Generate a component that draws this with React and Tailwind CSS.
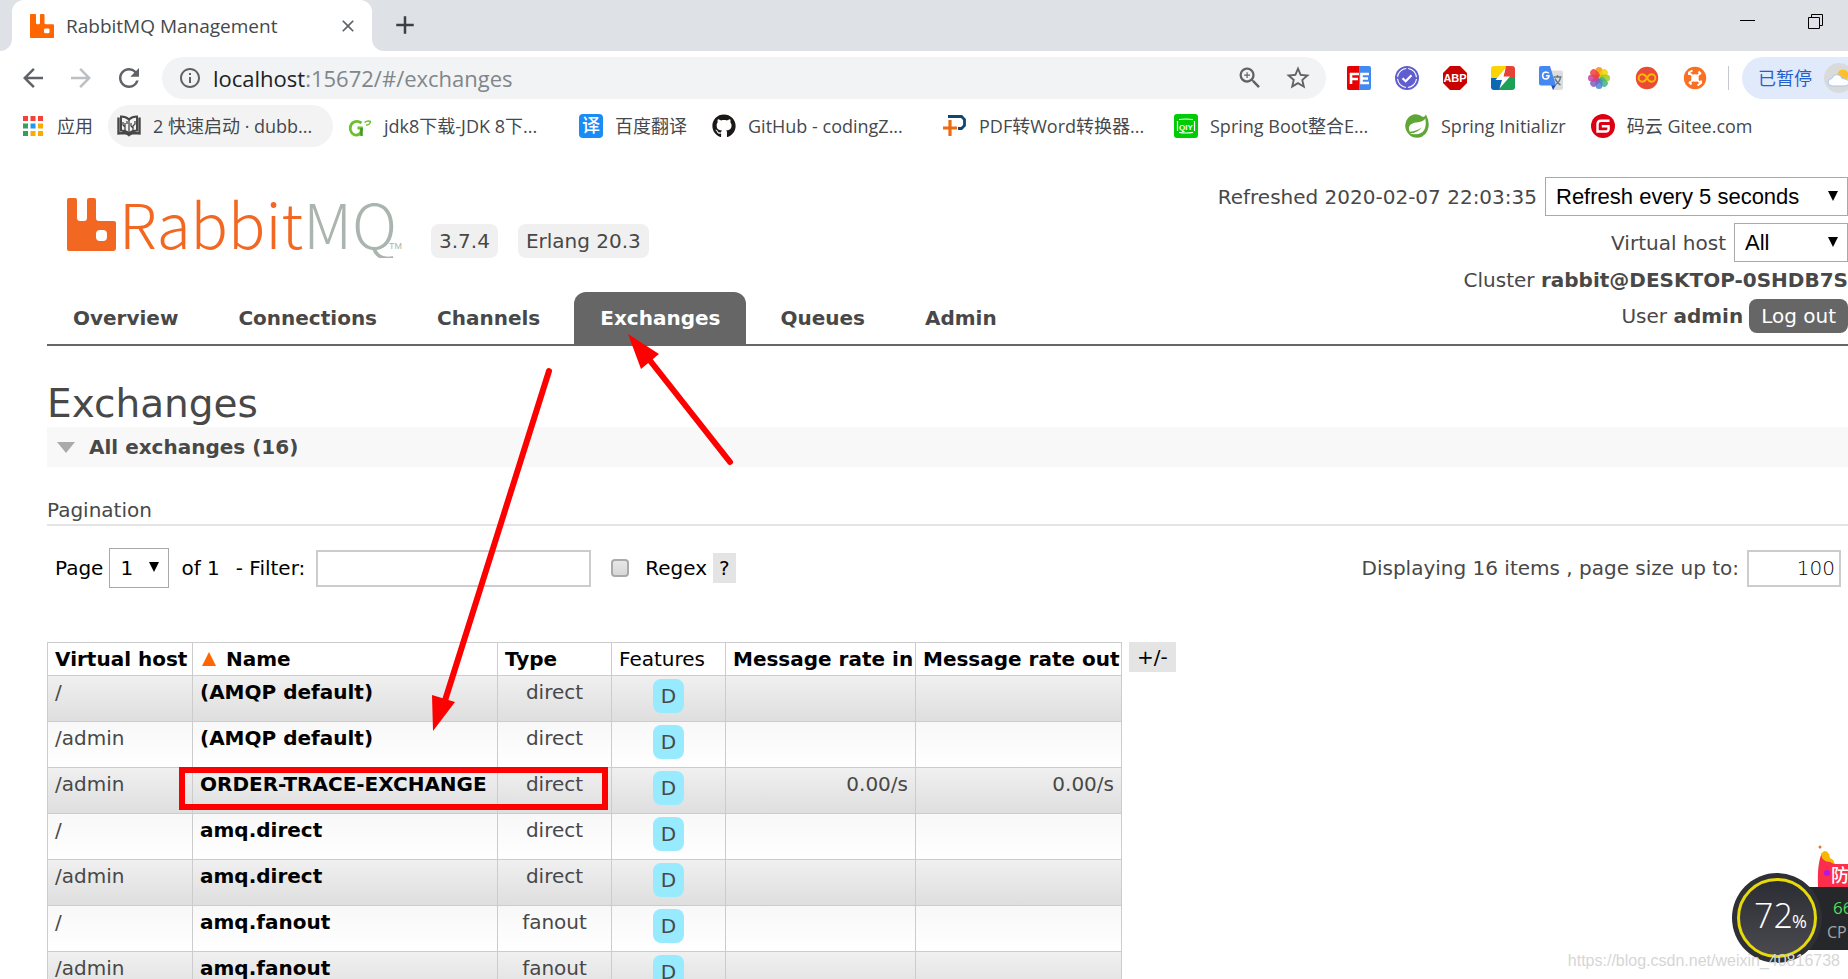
import React, { useState } from 'react';
import {
  MdAdd,
  MdArrowBack,
  MdArrowForward,
  MdClose,
  MdInfoOutline,
  MdRefresh,
  MdStarBorder,
  MdZoomIn,
} from 'react-icons/md';
import { FaGithub } from 'react-icons/fa';

const exchanges = [
  { vhost: '/', name: '(AMQP default)', type: 'direct' },
  { vhost: '/admin', name: '(AMQP default)', type: 'direct' },
  { vhost: '/admin', name: 'ORDER-TRACE-EXCHANGE', type: 'direct', rateIn: '0.00/s', rateOut: '0.00/s' },
  { vhost: '/', name: 'amq.direct', type: 'direct' },
  { vhost: '/admin', name: 'amq.direct', type: 'direct' },
  { vhost: '/', name: 'amq.fanout', type: 'fanout' },
  { vhost: '/admin', name: 'amq.fanout', type: 'fanout' },
];

const tabs = ['Overview', 'Connections', 'Channels', 'Exchanges', 'Queues', 'Admin'];

/* ---------- Icons ---------- */

const RabbitIcon = ({ className, color }) => (
  <svg viewBox="0 0 48 56" preserveAspectRatio="none" className={className} aria-hidden="true">
    <path
      fill={color}
      fillRule="evenodd"
      d="M2 0h8q2 0 2 2v19q0 3 3 3h2q3 0 3-3V2q0-2 2-2h5q2 0 2 2v19q0 3 3 3h14q2 0 2 2v28q0 2-2 2H2q-2 0-2-2V2q0-2 2-2zM31 34q-3 0-3 3v5q0 3 3 3h5q3 0 3-3v-5q0-3-3-3z"
    />
  </svg>
);

const AppsIcon = () => {
  const colors = ['#f44336', '#f44336', '#f44336', '#34a05a', '#2196f3', '#fbaa00', '#34a05a', '#fbaa00', '#fbaa00'];
  return (
    <svg viewBox="0 0 20 20" className="size-5" aria-hidden="true">
      {colors.map((c, i) => (
        <rect key={i} x={(i % 3) * 7.5} y={Math.floor(i / 3) * 7.5} width="5" height="5" fill={c} />
      ))}
    </svg>
  );
};

const BookIcon = () => (
  <svg viewBox="0 0 24 24" className="size-6" fill="none" stroke="#474747" aria-hidden="true">
    <path d="M1.500 3.500v16l5.500-.5q3 0 5 2 2-2 5-2l5.500.5v-16" strokeWidth="2.400" />
    <path d="M4 2.500q5 0 8 3 3-3 8-3v14q-5 0-8 3-3-3-8-3z" strokeWidth="2" />
    <path d="M12 6v13M8 17V9M6 8v3l2 2M10 7v3M16 17v-5l2-2V7M14 9v3l2 2" strokeWidth="1.300" />
  </svg>
);

const LeafGIcon = () => (
  <svg viewBox="0 0 24 24" className="size-6" fill="none" stroke="#6cc02c" aria-hidden="true">
    <path d="M13.500 9Q10 6.500 6 8 1.500 10.500 2.500 16 4 21.500 9 21q4.500-.5 4.500-7H9.500" strokeWidth="2.800" />
    <path d="M13.500 14v8" stroke="#3f9a1c" strokeWidth="2.400" />
    <path d="M16.500 8.500q3-2.500 6-1-.5 3.500-4.500 3.500" strokeWidth="1.500" />
  </svg>
);

const TranslateBadge = () => (
  <svg viewBox="0 0 24 24" className="size-6" aria-hidden="true">
    <rect width="24" height="24" rx="4" fill="#1a8cf8" />
    <text x="12" y="18" textAnchor="middle" fontSize="18" fontWeight="500" fill="#fff" fontFamily="Noto Sans CJK SC, sans-serif">译</text>
  </svg>
);

const PdfIcon = () => (
  <svg viewBox="0 0 24 24" className="size-6" fill="none" aria-hidden="true">
    <path d="M5 2.500h13.500l3 3v6l-3 3H15" stroke="#0f4673" strokeWidth="2.800" />
    <path d="M7 6v16M0 14h14" stroke="#ee6a10" strokeWidth="3.200" />
  </svg>
);

const QiyiIcon = () => (
  <svg viewBox="0 0 24 24" className="size-6" aria-hidden="true">
    <rect width="24" height="24" rx="3" fill="#00cc04" />
    <path d="M5 5.500q7-1 14 0M5 18.500q7 1 14 0M3.500 7v10M20.500 7v10" stroke="#fff" strokeWidth="1.200" fill="none" />
    <text x="12" y="15.500" textAnchor="middle" fontSize="8" fontWeight="700" fill="#fff" fontFamily="Liberation Sans, sans-serif">QIY</text>
  </svg>
);

const SpringIcon = () => (
  <svg viewBox="0 0 24 24" className="size-6" aria-hidden="true">
    <path fill="#5fa637" d="M21 .5q3.500 7 2.500 12.500-1.500 9.500-10.500 10.700Q7.500 24 4 20.500 0 16.500.2 11 1 3 8.500.6q4.500-1.300 9.500 2.400 2-.5 3-2.500z" />
    <path fill="#fff" d="M20.300 4.500q1.200 6.500-.8 11-2.800 5-9.500 4.800-3.500 0-5.300-1 7 .2 12.300-5.800-5 3.500-12.300 4.300Q2.500 13 6 10.300 9 8.300 13 8.200q5.300-.5 7.300-3.700z" />
  </svg>
);

const GiteeIcon = () => (
  <svg viewBox="0 0 24 24" className="size-6" aria-hidden="true">
    <circle cx="12" cy="12" r="12" fill="#dc0012" />
    <path d="M18.500 6.800H10q-3.500 0-3.500 3.500v7.200h8.300q2.800 0 2.800-2.800v-2.400H10.800" fill="none" stroke="#fff" strokeWidth="2.400" />
  </svg>
);

const FeIcon = () => (
  <svg viewBox="0 0 24 24" className="size-6" aria-hidden="true">
    <rect width="24" height="24" rx="2" fill="#428af0" />
    <path d="M2 0h10v24H2q-2 0-2-2V2q0-2 2-2z" fill="#e80000" />
    <path d="M4 18V8h8M4 13h7M22 8h-7.500v9H22M14.500 12.500H21" fill="none" stroke="#fff" strokeWidth="2.600" />
  </svg>
);

const CheckBadge = () => (
  <svg viewBox="0 0 24 24" className="size-6" fill="none" aria-hidden="true">
    <circle cx="12" cy="12" r="12" fill="#605dcf" />
    <circle cx="12" cy="12" r="9.500" stroke="#fff" strokeWidth="1.100" strokeDasharray="12.900 2" strokeDashoffset="-1" />
    <path d="M7.500 12.300l3.200 3 5.800-6" stroke="#fff" strokeWidth="2.200" />
  </svg>
);

const AbpIcon = () => (
  <svg viewBox="0 0 24 24" className="size-6" aria-hidden="true">
    <path d="M7 0h10l7 7v10l-7 7H7l-7-7V7z" fill="#cb0101" />
    <text x="12" y="16" textAnchor="middle" fontSize="11" fontWeight="700" fill="#fff" fontFamily="Liberation Sans, sans-serif">ABP</text>
  </svg>
);

const FlashIcon = () => (
  <svg viewBox="0 0 24 24" className="size-6" aria-hidden="true">
    <path d="M3 0h12L11 12H0V3q0-3 3-3z" fill="#fcd404" />
    <path d="M15 0h6q3 0 3 3v9H12z" fill="#e64235" />
    <path d="M0 12h12L9 24H3q-3 0-3-3z" fill="#0d69b4" />
    <path d="M12 12h12v9q0 3-3 3H8z" fill="#1da158" />
    <path d="M14.500 2L4.500 14h6.500l-2.500 8.500 10.500-12H12.500z" fill="#fff" />
  </svg>
);

const GTranslateIcon = () => (
  <svg viewBox="0 0 24 24" className="size-6" aria-hidden="true">
    <path d="M11 4.500h11q2 0 2 2V22q0 2-2 2h-8z" fill="#dcdcdc" />
    <path d="M14.500 11h8M18.500 9v2M16 19q5-3 5.500-8M16 12.500q1 3.500 5.500 6.500" stroke="#607988" strokeWidth="1.400" fill="none" />
    <path d="M12 19h5l-3 5z" fill="#2a49b0" />
    <path d="M2 0h9l6 19.500H2q-2 0-2-2V2q0-2 2-2z" fill="#4688f1" />
    <path d="M9.800 7.300Q8.500 6 6.800 6 3.700 6.300 3.600 9.600q.2 3.300 3.300 3.500 3-.3 3.100-3.300H7" stroke="#fff" strokeWidth="1.500" fill="none" />
  </svg>
);

const FlowerIcon = () => {
  const petals = ['#f79410', '#f2d300', '#a0c920', '#3cb680', '#4c86d0', '#7a62c0', '#c8409c', '#ee3f3a'];
  return (
    <svg viewBox="0 0 24 24" className="size-6" aria-hidden="true">
      {petals.map((c, i) => (
        <rect key={c} x="8.500" y="1" width="7" height="10.500" rx="3.500" fill={c} fillOpacity="0.850" transform={`rotate(${i * 45} 12 12)`} />
      ))}
    </svg>
  );
};

const InfinityIcon = () => (
  <svg viewBox="0 0 24 24" className="size-6" aria-hidden="true">
    <circle cx="12" cy="12" r="11.200" fill="#e94b35" />
    <path d="M12 12q-2-3.700-4.700-3.700a3.700 3.700 0 0 0 0 7.400Q10 15.700 12 12q2-3.700 4.700-3.700a3.700 3.700 0 0 1 0 7.400Q14 15.700 12 12z" fill="none" stroke="#fbb800" strokeWidth="1.900" />
  </svg>
);

const OrangeNodeIcon = () => (
  <svg viewBox="0 0 24 24" className="size-6" aria-hidden="true">
    <circle cx="12" cy="12" r="11.200" fill="#fa6f21" />
    <circle cx="12" cy="12" r="3.800" fill="#fff" />
    <g fill="none" stroke="#fff" strokeWidth="1.800">
      <path d="M7 7.500l3 2.500M17 7.500L14 10M7 16.500l3-2.500M17 16.500L14 14" />
      <path d="M6 9V6.500L9.500 4.500M15.500 5.500L18 8M18 14.500V17l-3.500 2.500M8.500 18.500L6 16" strokeWidth="2" />
    </g>
  </svg>
);

const WeatherIcon = () => (
  <svg viewBox="0 0 30 30" className="size-[30px] shrink-0" aria-hidden="true">
    <circle cx="15" cy="15" r="15" fill="#dadada" />
    <circle cx="19" cy="12" r="5.500" fill="#fbc02d" />
    <path d="M8 23q-4-.5-4-4 .3-3.500 4-3.500 1-4 5-4 4 .3 5 4l3 .5q4 .5 4 3.500-.3 3.500-4 3.500z" fill="#fdfdff" stroke="#a8c8ee" />
  </svg>
);

const extensions = [FeIcon, CheckBadge, AbpIcon, FlashIcon, GTranslateIcon, FlowerIcon, InfinityIcon, OrangeNodeIcon];

const bookmarks = [
  { label: '2 快速启动 · dubb...', icon: BookIcon, wide: true, active: true },
  { label: 'jdk8下载-JDK 8下...', icon: LeafGIcon, wide: true },
  { label: '百度翻译', icon: TranslateBadge },
  { label: 'GitHub - codingZ...', icon: () => <FaGithub className="size-6 text-[#1b1817]" />, wide: true },
  { label: 'PDF转Word转换器...', icon: PdfIcon, wide: true },
  { label: 'Spring Boot整合E...', icon: QiyiIcon, wide: true },
  { label: 'Spring Initializr', icon: SpringIcon },
  { label: '码云 Gitee.com', icon: GiteeIcon },
];

/* ---------- Browser chrome ---------- */

const TabStrip = () => (
  <div className="flex h-[51px] items-start bg-[#dee1e6] pl-3">
    <div className="relative flex h-full w-[360px] items-center rounded-t-xl bg-white pl-[18px] pr-[14px]">
      <svg viewBox="0 0 12 12" className="absolute -left-3 bottom-0 size-3" aria-hidden="true">
        <path d="M0 12A12 12 0 0 0 12 0V12Z" fill="#fff" />
      </svg>
      <svg viewBox="0 0 12 12" className="absolute -right-3 bottom-0 size-3" aria-hidden="true">
        <path d="M12 12A12 12 0 0 1 0 0V12Z" fill="#fff" />
      </svg>
      <RabbitIcon className="size-6" color="#ff6600" />
      <span className="ml-3 flex-1 text-[19px]/[28px] text-[#45494d]">RabbitMQ Management</span>
      <button type="button" aria-label="Close tab" className="text-[#5f6368]">
        <MdClose className="size-5" />
      </button>
    </div>
    <button type="button" aria-label="New tab" className="ml-[18px] mt-[10px] text-[#3c4043]">
      <MdAdd className="size-[30px]" />
    </button>
    <div className="ml-auto flex gap-[52px] pr-6 pt-[13px]">
      <button type="button" aria-label="Minimize">
        <svg viewBox="0 0 16 16" className="size-4" fill="none" stroke="#000" aria-hidden="true">
          <path d="M0 7.500h15" />
        </svg>
      </button>
      <button type="button" aria-label="Restore">
        <svg viewBox="0 0 16 16" className="size-4" fill="none" stroke="#000" aria-hidden="true">
          <path d="M.5 4.500h11v11H.5zM3.500 4.500v-3h11v11h-3" />
        </svg>
      </button>
    </div>
  </div>
);

const Toolbar = () => (
  <div className="flex h-[54px] items-center pl-[18px]">
    <div className="flex gap-[18px] pr-[18px] text-[#5f6368]">
      <button type="button" aria-label="Back"><MdArrowBack className="size-[30px]" /></button>
      <button type="button" aria-label="Forward" className="text-[#bdc0c3]"><MdArrowForward className="size-[30px]" /></button>
      <button type="button" aria-label="Reload"><MdRefresh className="size-[30px]" /></button>
    </div>
    <div className="flex h-[42px] flex-1 items-center rounded-full bg-[#f1f3f4] pl-4 pr-[14px] text-[#5f6368]">
      <MdInfoOutline className="size-6" />
      <span className="ml-[11px] flex-1 text-[22px]/[30px] text-[#80868b]">
        <span className="text-[#202124]">localhost</span>:15672/#/exchanges
      </span>
      <button type="button" aria-label="Zoom" className="mr-5"><MdZoomIn className="size-[28px]" /></button>
      <button type="button" aria-label="Bookmark this page"><MdStarBorder className="size-[28px]" /></button>
    </div>
    <div className="ml-[21px] flex gap-6">
      {extensions.map((Icon, i) => <Icon key={i} />)}
    </div>
    <div className="ml-[21px] h-6 w-px bg-[#c6c9cd]" />
    <button type="button" className="ml-[13px] flex h-[42px] w-[106px] items-center gap-3 overflow-hidden rounded-l-full bg-[#e1eafa] pl-4 text-[18px] text-[#1f62cf]">
      <span className="shrink-0">已暂停</span>
      <WeatherIcon />
    </button>
  </div>
);

const Bookmarks = () => (
  <div className="flex h-[42px] items-center text-[18px] whitespace-nowrap text-[#45494d]">
    <a href="#apps" className="flex w-[108px] items-center gap-[14px] pl-[23px]">
      <AppsIcon />
      应用
    </a>
    <div className="flex gap-[6px]">
      {bookmarks.map(({ label, icon: Icon, wide, active }) => (
        <a
          key={label}
          href="#bookmark"
          className={`flex h-[42px] items-center gap-3 rounded-full pl-[9px] pr-[10px] ${active ? 'bg-[#f3f3f3]' : ''}`}
        >
          <Icon />
          <span className={wide ? 'w-[170px]' : ''}>{label}</span>
        </a>
      ))}
    </div>
  </div>
);

/* ---------- Management page ---------- */

const Caret = () => (
  <svg viewBox="0 0 10 10" className="pointer-events-none absolute right-[10px] top-[14px] size-[10px]" aria-hidden="true">
    <path d="M0 0h10L5 10z" fill="#000" />
  </svg>
);

const Header = () => (
  <header className="flex items-stretch justify-between border-b-2 border-[#666] ml-[47px]">
    <div className="flex flex-col pt-[45px]">
      <div className="flex items-end pl-5">
        <svg viewBox="0 0 336 66" className="h-[66px] w-[336px]" role="img" aria-label="RabbitMQ">
          <path
            fill="#f26822"
            fillRule="evenodd"
            d="M2 6h6q2 0 2 2v18q0 3 3 3h4q3 0 3-3V8q0-2 2-2h5q2 0 2 2v18q0 3 3 3h15q2 0 2 2v25q0 3-3 3H2q-2 0-2-2V8q0-2 2-2zM33 38q-4 0-4 4v3q0 4 4 4h3q4 0 4-4v-3q0-4-4-4z"
          />
          <text x="52" y="57" fontSize="62" fontFamily="Noto Sans CJK SC, sans-serif" fontWeight="300" fill="#f26822">
            Rabbit<tspan fill="#a9b5ae">MQ</tspan>
          </text>
          <text x="322" y="57" fontSize="9" fontFamily="Liberation Sans, sans-serif" fill="#a9b5ae">TM</text>
        </svg>
        <span className="ml-7 h-[34px] rounded-lg bg-[#f0f0f0] px-2 leading-[34px]">3.7.4</span>
        <span className="ml-5 h-[34px] rounded-lg bg-[#f0f0f0] px-2 leading-[34px]">Erlang 20.3</span>
      </div>
      <nav className="mt-[34px] flex gap-2">
        {tabs.map((tab) => (
          <a
            key={tab}
            href={`#/${tab.toLowerCase()}`}
            className={`h-[52px] rounded-t-xl px-[26px] leading-[53px] font-bold ${tab === 'Exchanges' ? 'bg-[#666] text-white' : ''}`}
          >
            {tab}
          </a>
        ))}
      </nav>
    </div>
    <div className="flex flex-col items-end pt-[30px]">
      <label className="flex items-center gap-2">
        Refreshed 2020-02-07 22:03:35
        <span className="relative">
          <select className="block h-[39px] w-[303px] appearance-none rounded-none border border-[#a9a9a9] bg-white pl-[10px] font-['Liberation_Sans',Arial,sans-serif] text-[22px] text-black">
            <option>Refresh every 5 seconds</option>
          </select>
          <Caret />
        </span>
      </label>
      <label className="mt-[7px] flex items-center gap-2">
        Virtual host
        <span className="relative">
          <select className="block h-[39px] w-[114px] appearance-none rounded-none border border-[#a9a9a9] bg-white pl-[10px] font-['Liberation_Sans',Arial,sans-serif] text-[22px] text-black">
            <option>All</option>
          </select>
          <Caret />
        </span>
      </label>
      <p className="leading-[37px]">Cluster <b>rabbit@DESKTOP-0SHDB7S</b></p>
      <p className="flex items-center leading-[34px]">
        <span>User <b>admin</b></span>
        <button type="button" className="ml-[6px] h-[34px] rounded-lg bg-[#666] px-3 text-white">Log out</button>
      </p>
    </div>
  </header>
);

const Pagination = () => {
  const [filter, setFilter] = useState('');
  const [regex, setRegex] = useState(false);

  return (
    <div className="mt-[22px] flex h-10 items-center pl-2 pr-[7px]">
      <div className="flex items-center text-black">
        <label className="flex items-center gap-[6px]">
          Page
          <span className="relative">
            <select className="block h-10 w-[60px] appearance-none rounded-none border border-[#a9a9a9] bg-white pl-[10px]">
              <option>1</option>
            </select>
            <Caret />
          </span>
        </label>
        <span className="ml-3">of 1</span>
        <label htmlFor="filter" className="ml-4">- Filter:</label>
        <input
          id="filter"
          type="text"
          value={filter}
          onChange={(e) => setFilter(e.target.value)}
          className="ml-[11px] h-[37px] w-[275px] border-2 border-[#ccc] px-2"
        />
        <input
          id="regex"
          type="checkbox"
          checked={regex}
          onChange={(e) => setRegex(e.target.checked)}
          className="ml-5 size-[18px] appearance-none rounded-[4px] border-2 border-[#aaa] bg-linear-to-b from-[#e8e8e8] to-[#d8d8d8] checked:bg-[#666]"
        />
        <label htmlFor="regex" className="ml-4">Regex</label>
        <button type="button" className="ml-[6px] h-[30px] bg-[#e4e4e4] px-[6px]">?</button>
      </div>
      <label htmlFor="pagesize" className="ml-auto">Displaying 16 items , page size up to:</label>
      <input
        id="pagesize"
        type="text"
        defaultValue="100"
        className="ml-2 h-[37px] w-[94px] border-2 border-[#ccc] px-1 text-right font-extralight text-black"
      />
    </div>
  );
};

const ExchangeTable = () => (
  <div className="mt-[54px] flex items-start">
    <table className="w-[1075px] table-fixed border-collapse [&_td]:border [&_td]:border-[#ccc] [&_td]:px-[7px] [&_th]:border [&_th]:border-[#ccc] [&_th]:px-[7px]">
      <colgroup>
        <col className="w-[145px]" />
        <col className="w-[305px]" />
        <col className="w-[114px]" />
        <col className="w-[114px]" />
        <col className="w-[190px]" />
        <col />
      </colgroup>
      <thead>
        <tr className="h-[33px] text-left whitespace-nowrap text-black">
          <th>Virtual host</th>
          <th>
            <svg viewBox="0 0 14 14" className="ml-[2px] mr-[10px] inline size-[14px] align-baseline" aria-hidden="true">
              <path d="M7 0l7 14H0z" fill="#ff6600" />
            </svg>
            Name
          </th>
          <th>Type</th>
          <th className="font-normal">Features</th>
          <th>Message rate in</th>
          <th>Message rate out</th>
        </tr>
      </thead>
      <tbody>
        {exchanges.map((ex) => (
          <tr
            key={ex.vhost + ex.name}
            className="h-[46px] bg-linear-to-b align-top leading-[32px] odd:from-[#f0f0f0] odd:to-[#dedede] even:from-[#f8f8f8] even:to-white"
          >
            <td>{ex.vhost}</td>
            <td className="whitespace-nowrap">
              <a href="#/exchange" className="font-bold text-black">{ex.name}</a>
            </td>
            <td className="text-center">{ex.type}</td>
            <td className="pt-[3px] text-center">
              <abbr title="durable" className="inline-block h-[34px] rounded-lg bg-[#98ebff] px-2 leading-[34px] no-underline">D</abbr>
            </td>
            <td className="text-right">{ex.rateIn}</td>
            <td className="text-right">{ex.rateOut}</td>
          </tr>
        ))}
      </tbody>
    </table>
    <button type="button" className="ml-[7px] h-[30px] bg-[#e4e4e4] px-2 text-black">+/-</button>
  </div>
);

/* ---------- Overlays ---------- */

const Annotations = () => (
  <svg width="760" height="820" className="pointer-events-none absolute left-0 top-0" fill="none" stroke="#f00" aria-hidden="true">
    <path d="M730 462L648 358M549 371L442 710" strokeWidth="6" strokeLinecap="round" />
    <path d="M628 334L659 354L641 369ZM433 731L432 695L455 702Z" fill="#f00" stroke="none" />
    <rect x="182" y="770" width="423" height="37" strokeWidth="6" />
  </svg>
);

const SpeedBall = () => (
  <svg viewBox="0 -20 120 140" className="pointer-events-none absolute bottom-0 right-0 h-[140px] w-[120px]" role="img" aria-label="72%">
    <defs>
      <linearGradient id="ball" x1="0" y1="0" x2="0" y2="1">
        <stop offset="0" stopColor="#2c2d34" />
        <stop offset="1" stopColor="#4a4a50" />
      </linearGradient>
    </defs>
    <path d="M90 28Q89 4 94-6L107 5H120V28Z" fill="#fb2f4b" />
    <path d="M93-5q4-6 8 0l1 4q5 2 4 6l-4-2q-8 0-9-8z" fill="#f6b800" />
    <circle cx="92" cy="-12" r="1.500" fill="#e8742a" />
    <circle cx="99" cy="14" r="3" fill="#b416e8" />
    <rect x="78" y="28" width="50" height="63" fill="#25272b" />
    <circle cx="49" cy="59" r="45" fill="#2f3036" />
    <circle cx="49" cy="59" r="38.500" fill="url(#ball)" stroke="#e6da0c" strokeWidth="3" />
    <g fontFamily="Open Sans, Noto Sans CJK SC, sans-serif">
      <text x="26" y="69" fontSize="34" fontWeight="300" fill="#fff">72</text>
      <text x="64" y="69" fontSize="18" fontWeight="500" fill="#fff">%</text>
      <text x="103" y="23" fontSize="18" fontWeight="500" fill="#fff">防</text>
      <text x="105" y="55" fontSize="17" fill="#4fdc5a">66</text>
      <text x="99" y="79" fontSize="16" fill="#a3a3a3">CP</text>
    </g>
  </svg>
);

const App = () => (
  <div className="relative h-screen overflow-hidden bg-white font-['Open_Sans','Noto_Sans_CJK_SC',sans-serif]">
    <TabStrip />
    <Toolbar />
    <Bookmarks />

    <div className="font-['DejaVu_Sans',Verdana,sans-serif] text-[20px] text-[#484848]">
      <Header />
      <main className="pl-[47px]">
        <h1 className="pt-[35px] text-[39px] leading-[46px]">Exchanges</h1>
        <h2 className="flex h-10 items-center bg-[#f8f8f8] pl-[10px] font-bold">
          <svg viewBox="0 0 18 11" className="mr-[14px] h-[11px] w-[18px]" aria-hidden="true">
            <path d="M0 0h18L9 11z" fill="#aaa" />
          </svg>
          All exchanges (16)
        </h2>
        <h3 className="border-b-2 border-[#e4e4e4] pt-[30px] leading-[27px]">Pagination</h3>
        <Pagination />
        <ExchangeTable />
      </main>
    </div>

    <Annotations />
    <SpeedBall />
    <p className="pointer-events-none absolute bottom-[6px] right-2 font-['Liberation_Sans',Arial,sans-serif] text-base text-[#d6d6d6]">
      https://blog.csdn.net/weixin_40816738
    </p>
  </div>
);

export default App;
